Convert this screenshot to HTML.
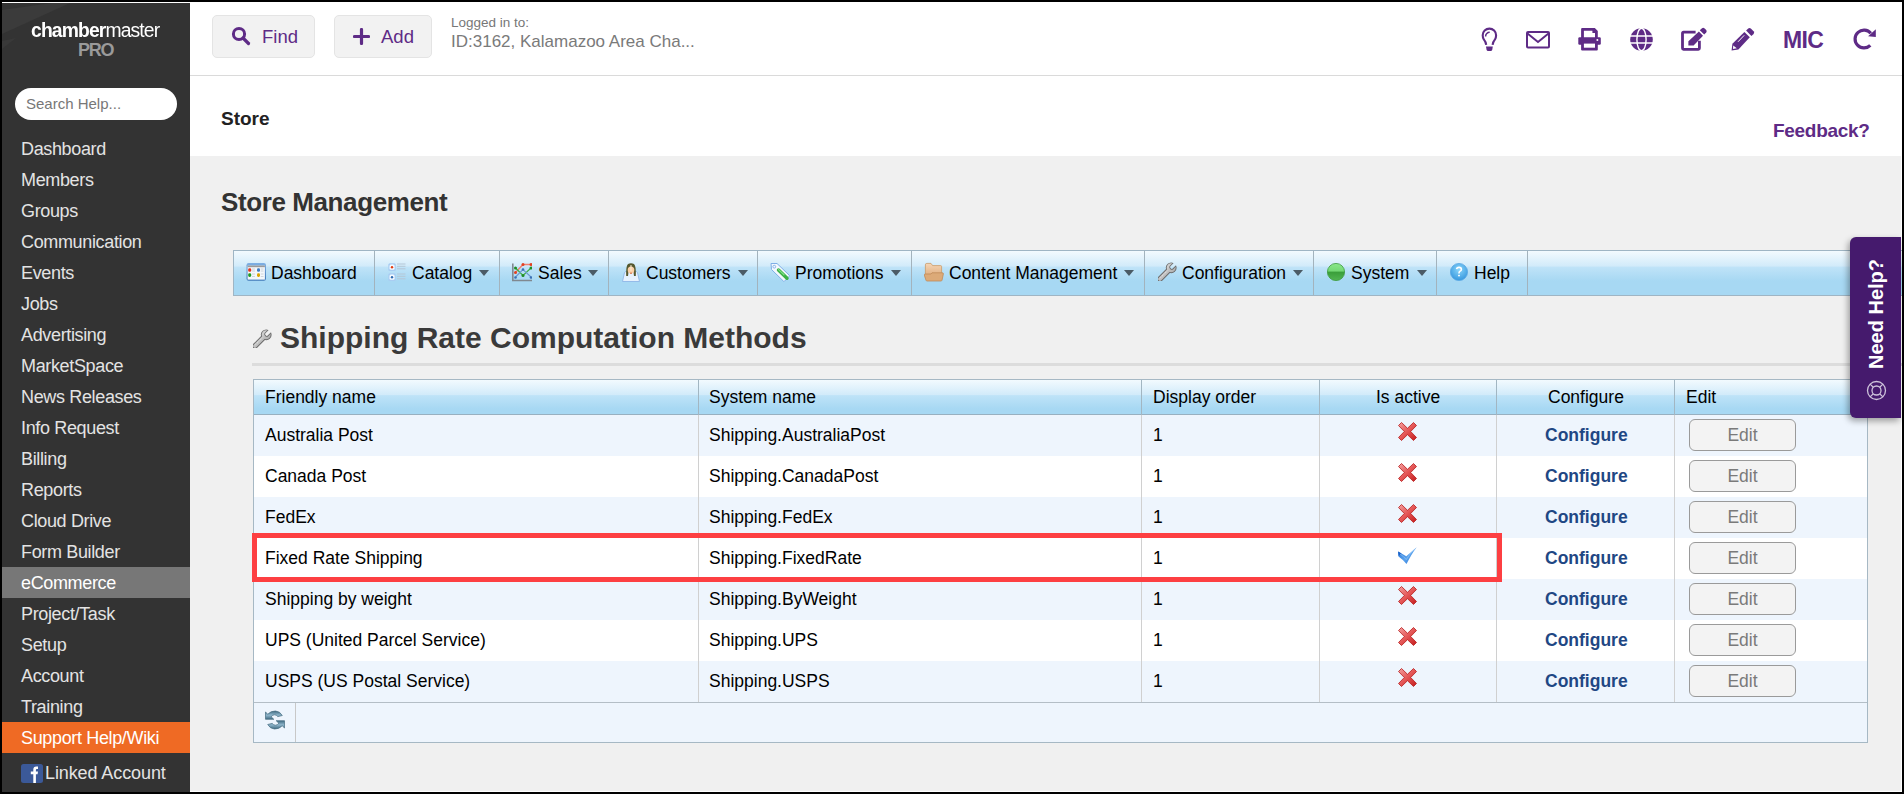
<!DOCTYPE html>
<html><head><meta charset="utf-8">
<style>
*{margin:0;padding:0;box-sizing:border-box}
html,body{width:1904px;height:794px;overflow:hidden;background:#000;font-family:"Liberation Sans",sans-serif;position:relative}
.a,.t{position:absolute}
.t{white-space:nowrap}
#frame{position:absolute;left:2px;top:2px;width:1900px;height:790px;background:#fff}
#side{position:absolute;left:2px;top:3px;width:188px;height:789px;background:#333;overflow:hidden}
.nav{position:absolute;left:2px;width:188px;height:31px;color:#e3e3e3;font-size:18px;letter-spacing:-0.35px;padding-left:19px;line-height:33px;white-space:nowrap}
.nav.sel{background:#777;color:#fff}
.nav.org{background:#ef6a24;color:#fff}
#topline{position:absolute;left:190px;top:75px;width:1712px;height:1px;background:#dadada}
.btn{position:absolute;top:15px;height:43px;background:#f2f2f2;border:1px solid #e4e4e4;border-radius:5px;color:#5e2b86;font-size:18px}
#gray{position:absolute;left:190px;top:156px;width:1711px;height:635px;background:#f0f0f0}
#menu{position:absolute;left:233px;top:250px;width:1669px;height:46px;border:1px solid #9fb5c4;border-right:none;
background:linear-gradient(#f3fafe 0%,#d2ebfa 34%,#bfe3f8 37%,#a7d8f3 68%,#a7d8f3 100%)}
.sep{position:absolute;top:251px;width:1px;height:44px;background:#a3b3bd}
.mt{position:absolute;top:263px;font-size:17.5px;color:#000;white-space:nowrap}
.arr{position:absolute;top:270px;width:0;height:0;border-left:5px solid transparent;border-right:5px solid transparent;border-top:6px solid #4b5b66}
#tbl{position:absolute;left:253px;top:379px;width:1615px;height:364px;border:1px solid #a6b8c4;background:#eef5fd}
#hdr{position:absolute;left:254px;top:380px;width:1613px;height:35px;border-bottom:1px solid #98b0c0;
background:linear-gradient(#f2fafe 0%,#d2ebfa 43%,#bee3f8 46%,#a7d8f3 85%,#a7d8f3 100%)}
.row{position:absolute;left:254px;width:1613px;height:41px;background:#eef5fd}
.row.w{background:#fff}
.vl{position:absolute;width:1px;background:#d0d0d0}
.cell{position:absolute;font-size:17.5px;color:#000;white-space:nowrap}
.cfg{position:absolute;font-size:17.5px;font-weight:bold;color:#1f4784;white-space:nowrap}
.eb{position:absolute;left:1689px;width:107px;height:32px;border:1px solid #9a9a9a;border-radius:6px;background:#f3f3f3;color:#7a7a7a;font-size:17.5px;text-align:center;line-height:30px}
</style></head><body>
<div id="frame"></div>
<div id="topline"></div>
<div class="btn" style="left:212px;width:103px"></div>
<svg class="a" style="left:231px;top:26px" width="20" height="20" viewBox="0 0 20 20"><circle cx="8" cy="8" r="5.6" fill="none" stroke="#5e2b86" stroke-width="3"/><path d="M12 12 L17.5 17.5" stroke="#5e2b86" stroke-width="3.2" stroke-linecap="round"/></svg>
<div class="t" style="left:262px;top:26px;font-size:18.5px;color:#5e2b86">Find</div>
<div class="btn" style="left:334px;width:98px"></div>
<svg class="a" style="left:353px;top:28px" width="17" height="17" viewBox="0 0 17 17"><path d="M8.5 1.5 V15.5 M1.5 8.5 H15.5" stroke="#5e2b86" stroke-width="3.2" stroke-linecap="round"/></svg>
<div class="t" style="left:381px;top:26px;font-size:18.5px;color:#5e2b86">Add</div>
<div class="t" style="left:451px;top:15px;font-size:13.5px;color:#777">Logged in to:</div>
<div class="t" style="left:451px;top:32px;font-size:17px;color:#7a7a7a">ID:3162, Kalamazoo Area Cha...</div>
<!-- icons -->
<svg class="a" style="left:1480px;top:27px" width="19" height="25" viewBox="0 0 19 25"><path d="M6.2 17.8 Q5.8 14.8 3.8 12.4 Q2.7 10.8 2.7 8.3 A6.7 6.7 0 0 1 16.1 8.3 Q16.1 10.8 15 12.4 Q13 14.8 12.6 17.8" fill="none" stroke="#5e2b86" stroke-width="2.1"/><path d="M6 19.6 H12.8 L12.2 23 Q11.8 24.1 10.8 24.1 H8 Q7 24.1 6.6 23 Z" fill="#5e2b86"/><path d="M5.6 9.4 A4.1 4.1 0 0 1 9.7 5.2" fill="none" stroke="#5e2b86" stroke-width="1.5"/></svg>
<svg class="a" style="left:1525px;top:30px" width="26" height="19" viewBox="0 0 26 19"><rect x="2" y="2" width="22" height="15.5" rx="1" fill="none" stroke="#5e2b86" stroke-width="2"/><path d="M2.5 3.5 L13 12 L23.5 3.5" fill="none" stroke="#5e2b86" stroke-width="2"/></svg>
<svg class="a" style="left:1577px;top:27px" width="25" height="25" viewBox="0 0 25 25"><path d="M5.1 1 H17.8 L20.8 4 V11 H4.1 V2 Q4.1 1 5.1 1 Z" fill="#5e2b86"/><path d="M6.9 3.8 H15.4 V6.1 H18 V11 H6.9 Z" fill="#fff"/><rect x="1.3" y="10.2" width="22.5" height="7.5" rx="1.2" fill="#5e2b86"/><circle cx="20.4" cy="13" r="1" fill="#fff"/><path d="M4.1 16 H20.8 V22.5 Q20.8 23.5 19.8 23.5 H5.1 Q4.1 23.5 4.1 22.5 Z" fill="#5e2b86"/><rect x="6.9" y="16.6" width="11.1" height="4.1" fill="#fff"/></svg>
<svg class="a" style="left:1629px;top:27px" width="25" height="25" viewBox="0 0 25 25"><circle cx="12.5" cy="12.5" r="11.3" fill="#5e2b86"/><path d="M1 9 H24 M1 16 H24" stroke="#fff" stroke-width="1.4"/><ellipse cx="12.5" cy="12.5" rx="4.6" ry="11.3" fill="none" stroke="#fff" stroke-width="1.4"/></svg>
<svg class="a" style="left:1680px;top:27px" width="28" height="25" viewBox="0 0 28 25"><path d="M15.6 5.2 H3.5 Q2.5 5.2 2.5 6.2 V21.3 Q2.5 22.3 3.5 22.3 H18.4 Q19.4 22.3 19.4 21.3 V13.8" fill="none" stroke="#5e2b86" stroke-width="2.8"/><path d="M8.4 14.3 L18.9 4.6 L23 8.7 L13.6 18.5 L8.4 18.5 Z" fill="#5e2b86"/><path d="M19.8 3.3 L22 1.2 Q23.2 0.2 24.4 1.2 L26.2 3 Q27.2 4.2 26.2 5.4 L24.2 7.5 Z" fill="#5e2b86"/></svg>
<svg class="a" style="left:1730px;top:27px" width="26" height="25" viewBox="0 0 26 25"><path d="M16.1 3.6 L18.2 1.6 Q19.5 0.4 20.8 1.6 L23.6 4.3 Q24.8 5.6 23.6 6.9 L21.4 9 Z" fill="#5e2b86"/><path d="M14.4 5.1 L19.8 10.2 L8.4 22.4 L1.6 23.6 L2.4 16.8 Z" fill="#5e2b86"/><path d="M14.2 8.3 L8 14.8" stroke="#fff" stroke-width="1"/><path d="M3.2 18.6 L6.8 21.2 L3 21.9 Z" fill="#fff"/></svg>
<div class="t" style="left:1783px;top:27px;font-size:23px;font-weight:bold;color:#5e2b86;letter-spacing:-0.6px">MIC</div>
<svg class="a" style="left:1852px;top:27px" width="26" height="25" viewBox="0 0 26 25"><path d="M18.3 18.3 A8.9 8.9 0 1 1 18.8 6.3" fill="none" stroke="#5e2b86" stroke-width="3.2"/><path d="M16.1 9.3 L23.8 2.3 V10 Z" fill="#5e2b86"/></svg>
<div class="t" style="left:221px;top:108px;font-size:19px;font-weight:bold;color:#222">Store</div>
<div class="t" style="left:1773px;top:120px;font-size:19px;font-weight:bold;color:#5e2b86;letter-spacing:-0.3px">Feedback?</div>
<div id="gray"></div>
<div class="t" style="left:221px;top:187px;font-size:26px;font-weight:bold;color:#333;letter-spacing:-0.4px">Store Management</div>
<div id="menu"></div>
<div class="sep" style="left:374px"></div>
<div class="sep" style="left:499px"></div>
<div class="sep" style="left:608px"></div>
<div class="sep" style="left:757px"></div>
<div class="sep" style="left:911px"></div>
<div class="sep" style="left:1144px"></div>
<div class="sep" style="left:1313px"></div>
<div class="sep" style="left:1436px"></div>
<div class="sep" style="left:1527px"></div>
<div class="mt" style="left:271px">Dashboard</div>
<svg class="a" style="left:246px;top:262px" width="20" height="20" viewBox="0 0 20 20"><defs><linearGradient id="gd1" x1="0" y1="0" x2="0" y2="1"><stop offset="0" stop-color="#7fb0e4"/><stop offset="1" stop-color="#3f78b8"/></linearGradient></defs><rect x="0.5" y="1" width="19.5" height="17.8" rx="2.2" fill="url(#gd1)"/><rect x="1.6" y="3.6" width="17.3" height="14" fill="#f3f7fb"/><rect x="1.6" y="3.6" width="17.3" height="1.6" fill="#9a9a9a"/><rect x="2.2" y="6.2" width="3" height="3.6" rx="1.3" fill="#e2321c"/><rect x="11" y="6.2" width="3" height="3.6" rx="1.3" fill="#3f7cc4"/><rect x="2.2" y="11.3" width="3" height="3.6" rx="1.3" fill="#1f9a24"/><rect x="11" y="11.3" width="3" height="3.6" rx="1.3" fill="#dca400"/><g stroke="#c4ccd4" stroke-width="0.8"><path d="M6 7 H9 M6 9 H9 M6 12 H9 M6 14.5 H9 M14.8 7 H17.5 M14.8 9 H17.5 M14.8 12 H17.5 M14.8 14.5 H17.5"/></g></svg>
<div class="mt" style="left:412px">Catalog</div>
<div class="arr" style="left:479px"></div>
<svg class="a" style="left:388px;top:263px" width="19" height="19" viewBox="0 0 19 19"><rect x="0.3" y="0.3" width="7.5" height="7.6" rx="1.5" fill="#a9cdf2"/><rect x="1.5" y="1.5" width="5.1" height="5.2" rx="1.5" fill="#f4f9ff"/><circle cx="4" cy="4.2" r="1.2" fill="#e03a10"/><rect x="0.3" y="10.3" width="7.5" height="7.6" rx="1.5" fill="#a9cdf2"/><rect x="1.5" y="11.5" width="5.1" height="5.2" rx="1.5" fill="#f4f9ff"/><circle cx="4" cy="14.2" r="1.2" fill="#2f6cb2"/><g stroke="#b5c7d6" stroke-width="1"><path d="M9 1 H17.5 M9 3.3 H17.5 M9 5.8 H17.5 M9 11 H17.5 M9 13.3 H17.5 M9 15.8 H17.5"/></g></svg>
<div class="mt" style="left:538px">Sales</div>
<div class="arr" style="left:588px"></div>
<svg class="a" style="left:512px;top:263px" width="20" height="19" viewBox="0 0 20 19"><path d="M0.8 0.5 V17.5 H20" fill="none" stroke="#808890" stroke-width="1.6"/><path d="M3.5 9.5 L11 1.5 H19" fill="none" stroke="#f08070" stroke-width="1.3"/><path d="M3.5 5 L11 12.5 L19 5" fill="none" stroke="#3cae40" stroke-width="1.1"/><path d="M3.5 14 L11 6.5 L19 14" fill="none" stroke="#6c9ad0" stroke-width="1.1"/><g fill="#e24020"><circle cx="3.5" cy="9.5" r="1.5"/><circle cx="11" cy="1.5" r="1.5"/><circle cx="19" cy="1.5" r="1.5"/></g><g fill="#1f8c26"><circle cx="3.5" cy="5" r="1.5"/><circle cx="11" cy="12.5" r="1.5"/><circle cx="19" cy="5" r="1.5"/></g><g fill="#3a70b4"><circle cx="3.5" cy="14.5" r="1.3"/><circle cx="11" cy="6.5" r="1.3"/><circle cx="19" cy="14.5" r="1.3"/></g></svg>
<div class="mt" style="left:646px">Customers</div>
<div class="arr" style="left:738px"></div>
<svg class="a" style="left:621px;top:262px" width="20" height="20" viewBox="0 0 20 20"><path d="M1.5 19.5 L3.5 10.5 Q4 9.5 5.5 9.5 H14.5 Q16 9.5 16.5 10.5 L18.5 19.5 Z" fill="#e6f1fd" stroke="#8fb6e6" stroke-width="0.9"/><path d="M5.2 14 Q4.8 4 7 2 Q10 0.3 13 2 Q15.2 4 14.8 14 L13 14 L12.5 10 H7.5 L7 14 Z" fill="#55582e"/><ellipse cx="10" cy="8" rx="3.3" ry="3.6" fill="#fbd0a8"/><path d="M9.5 3 L10.5 3 L10.3 9 L9.7 9 Z" fill="#fff4e0"/><ellipse cx="10" cy="11.2" rx="1" ry="0.6" fill="#d06030"/></svg>
<div class="mt" style="left:795px">Promotions</div>
<div class="arr" style="left:891px"></div>
<svg class="a" style="left:770px;top:262px" width="20" height="20" viewBox="0 0 20 20"><path d="M1 1.5 L7 1.5 L19.2 13.2 Q19.6 13.7 19.2 14.2 L14.5 19.2 Q14 19.6 13.5 19.2 L1.5 7.5 Z" fill="#f4f8fe" stroke="#7eaee6" stroke-width="1"/><circle cx="4.3" cy="4.7" r="1.4" fill="none" stroke="#7eaee6" stroke-width="0.9"/><path d="M8.5 8 L17 16.3" stroke="#3bb146" stroke-width="3.4" stroke-linecap="round"/><path d="M8.6 7.6 L14 12.8" stroke="#7fe088" stroke-width="1.2" stroke-linecap="round"/></svg>
<div class="mt" style="left:949px">Content Management</div>
<div class="arr" style="left:1124px"></div>
<svg class="a" style="left:924px;top:262px" width="20" height="20" viewBox="0 0 20 20"><defs><linearGradient id="gf" x1="0" y1="0" x2="0" y2="1"><stop offset="0" stop-color="#f6d6b6"/><stop offset="1" stop-color="#dca878"/></linearGradient></defs><path d="M1.4 2.8 Q1.4 1.4 2.8 1.4 H7 L8.6 3.6 H16.6 Q17.6 3.6 17.6 4.6 V15.5 H1.4 Z" fill="url(#gf)" stroke="#c99a68" stroke-width="0.8"/><path d="M0.3 13 Q0.3 12 1.3 12 H7 L8 10.8 H18.5 Q19.4 10.8 19.4 11.8 L18 18.3 Q17.8 19 17 19 H3 Q2.2 19 2 18.3 Z" fill="#dcaa78" stroke="#c08a58" stroke-width="0.8"/></svg>
<div class="mt" style="left:1182px">Configuration</div>
<div class="arr" style="left:1293px"></div>
<svg class="a" style="left:1157px;top:262px" width="20" height="20" viewBox="0 0 20 20"><defs><mask id="m1b"><rect width="20" height="20" fill="#fff"/><path d="M14.8 5.2 L21 -1" stroke="#000" stroke-width="3.2" stroke-linecap="round"/></mask><mask id="m2b"><rect width="20" height="20" fill="#fff"/><path d="M14.8 5.2 L21 -1" stroke="#000" stroke-width="4.8" stroke-linecap="round"/></mask><linearGradient id="wgb" x1="0" y1="0" x2="1" y2="1"><stop offset="0" stop-color="#dadada"/><stop offset="1" stop-color="#a8a8a8"/></linearGradient></defs><g mask="url(#m1b)"><circle cx="14.2" cy="5.8" r="5.4" fill="#6a6a6a"/><path d="M3 17 L12 8" stroke="#6a6a6a" stroke-width="5.4" stroke-linecap="round"/></g><g mask="url(#m2b)"><circle cx="14.2" cy="5.8" r="4.5" fill="url(#wgb)"/><path d="M3 17 L12 8" stroke="url(#wgb)" stroke-width="3.6" stroke-linecap="round"/></g><path d="M3.6 15.6 L10.5 8.7" stroke="#ececec" stroke-width="0.8" stroke-dasharray="1.2 1"/></svg>
<div class="mt" style="left:1351px">System</div>
<div class="arr" style="left:1417px"></div>
<svg class="a" style="left:1327px;top:263px" width="18" height="18" viewBox="0 0 18 18"><defs><linearGradient id="gs" x1="0" y1="0" x2="0" y2="1"><stop offset="0" stop-color="#8ae88a"/><stop offset="0.45" stop-color="#74d874"/><stop offset="0.5" stop-color="#3a9e3a"/><stop offset="1" stop-color="#52b552"/></linearGradient></defs><circle cx="9" cy="9" r="8.6" fill="url(#gs)" stroke="#3e9a3e" stroke-width="0.8"/></svg>
<div class="mt" style="left:1474px">Help</div>
<svg class="a" style="left:1450px;top:263px" width="18" height="18" viewBox="0 0 18 18"><defs><radialGradient id="gh" cx="0.5" cy="0.35" r="0.6"><stop offset="0" stop-color="#8ad6fb"/><stop offset="1" stop-color="#3d9ce0"/></radialGradient></defs><circle cx="9" cy="9" r="8.6" fill="url(#gh)" stroke="#5aa8e4" stroke-width="0.8"/><path d="M6.6 6.2 Q6.8 4.4 9 4.4 Q11.4 4.4 11.4 6.4 Q11.4 7.6 9.8 8.4 Q9 8.9 9 10.4" fill="none" stroke="#fff" stroke-width="1.6"/><rect x="8.1" y="11.8" width="1.8" height="1.5" fill="#fff"/></svg>

<div id="side">
 <svg class="a" style="left:0;top:0" width="188" height="60"><path d="M0 7 L50 0 L68 0 L0 31 Z" fill="#3b3b3b"/><path d="M0 38 L14 35 L0 46 Z" fill="#393939"/></svg>
</div>
<div class="t" style="left:31px;top:19px;font-size:20px;color:#fff;letter-spacing:-0.9px;transform:scaleX(0.966);transform-origin:0 0"><b>chamber</b>master</div>
<div class="t" style="left:78px;top:40px;font-size:18px;color:#9a9a9a;font-weight:bold;letter-spacing:-1.3px">PRO</div>
<div class="a" style="left:15px;top:88px;width:162px;height:32px;border-radius:16px;background:#fff"></div>
<div class="t" style="left:26px;top:95px;font-size:15px;color:#777">Search Help...</div>
<div class="nav" style="top:133px">Dashboard</div>
<div class="nav" style="top:164px">Members</div>
<div class="nav" style="top:195px">Groups</div>
<div class="nav" style="top:226px">Communication</div>
<div class="nav" style="top:257px">Events</div>
<div class="nav" style="top:288px">Jobs</div>
<div class="nav" style="top:319px">Advertising</div>
<div class="nav" style="top:350px">MarketSpace</div>
<div class="nav" style="top:381px">News Releases</div>
<div class="nav" style="top:412px">Info Request</div>
<div class="nav" style="top:443px">Billing</div>
<div class="nav" style="top:474px">Reports</div>
<div class="nav" style="top:505px">Cloud Drive</div>
<div class="nav" style="top:536px">Form Builder</div>
<div class="nav sel" style="top:567px">eCommerce</div>
<div class="nav" style="top:598px">Project/Task</div>
<div class="nav" style="top:629px">Setup</div>
<div class="nav" style="top:660px">Account</div>
<div class="nav" style="top:691px">Training</div>
<div class="nav org" style="top:722px">Support Help/Wiki</div>
<svg class="a" style="left:21px;top:764px" width="22" height="19" viewBox="0 0 22 19"><rect x="0" y="0" width="22" height="19" rx="2.5" fill="#3b5998"/><path d="M12.3 19 V10.3 H9.8 V7.6 H12.3 V5.6 Q12.3 2.4 15.3 2.4 H17 V5 H15.8 Q14.9 5 14.9 6 V7.6 H17 L16.6 10.3 H14.9 V19 Z" fill="#fff"/></svg>
<div class="t" style="left:45px;top:763px;font-size:18px;color:#e3e3e3;letter-spacing:-0.1px">Linked Account</div>

<svg class="a" style="left:252px;top:329px" width="20" height="20" viewBox="0 0 20 20"><defs><mask id="m1a"><rect width="20" height="20" fill="#fff"/><path d="M14.8 5.2 L21 -1" stroke="#000" stroke-width="3.2" stroke-linecap="round"/></mask><mask id="m2a"><rect width="20" height="20" fill="#fff"/><path d="M14.8 5.2 L21 -1" stroke="#000" stroke-width="4.8" stroke-linecap="round"/></mask><linearGradient id="wga" x1="0" y1="0" x2="1" y2="1"><stop offset="0" stop-color="#dadada"/><stop offset="1" stop-color="#a8a8a8"/></linearGradient></defs><g mask="url(#m1a)"><circle cx="14.2" cy="5.8" r="5.4" fill="#6a6a6a"/><path d="M3 17 L12 8" stroke="#6a6a6a" stroke-width="5.4" stroke-linecap="round"/></g><g mask="url(#m2a)"><circle cx="14.2" cy="5.8" r="4.5" fill="url(#wga)"/><path d="M3 17 L12 8" stroke="url(#wga)" stroke-width="3.6" stroke-linecap="round"/></g><path d="M3.6 15.6 L10.5 8.7" stroke="#ececec" stroke-width="0.8" stroke-dasharray="1.2 1"/></svg>
<div class="t" style="left:280px;top:321px;font-size:30px;font-weight:bold;color:#3a3a3a">Shipping Rate Computation Methods</div>
<div class="a" style="left:252px;top:363px;width:1650px;height:3px;background:#dcdcdc"></div>
<div id="tbl"></div>
<div id="hdr"></div>
<div class="row" style="top:415px"></div>
<div class="row w" style="top:456px"></div>
<div class="row" style="top:497px"></div>
<div class="row w" style="top:538px"></div>
<div class="row" style="top:579px"></div>
<div class="row w" style="top:620px"></div>
<div class="row" style="top:661px"></div>
<div class="vl" style="left:698px;top:415px;height:287px"></div>
<div class="vl" style="left:698px;top:380px;height:35px;background:#a2b6c2"></div>
<div class="vl" style="left:1141px;top:415px;height:287px"></div>
<div class="vl" style="left:1141px;top:380px;height:35px;background:#a2b6c2"></div>
<div class="vl" style="left:1319px;top:415px;height:287px"></div>
<div class="vl" style="left:1319px;top:380px;height:35px;background:#a2b6c2"></div>
<div class="vl" style="left:1496px;top:415px;height:287px"></div>
<div class="vl" style="left:1496px;top:380px;height:35px;background:#a2b6c2"></div>
<div class="vl" style="left:1674px;top:415px;height:287px"></div>
<div class="vl" style="left:1674px;top:380px;height:35px;background:#a2b6c2"></div>
<div class="a" style="left:254px;top:702px;width:1613px;height:1px;background:#b4bec6"></div>
<div class="vl" style="left:295px;top:703px;height:39px;background:#c8c8c8"></div>
<div class="cell" style="left:265px;top:387px">Friendly name</div>
<div class="cell" style="left:709px;top:387px">System name</div>
<div class="cell" style="left:1153px;top:387px">Display order</div>
<div class="cell" style="left:1376px;top:387px">Is active</div>
<div class="cell" style="left:1548px;top:387px">Configure</div>
<div class="cell" style="left:1686px;top:387px">Edit</div>
<div class="cell" style="left:265px;top:425px">Australia Post</div>
<div class="cell" style="left:709px;top:425px">Shipping.AustraliaPost</div>
<div class="cell" style="left:1153px;top:425px">1</div>
<svg class="a" style="left:1398px;top:422px" width="19" height="19" viewBox="0 0 19 19"><defs><linearGradient id="gx0" x1="0" y1="0" x2="1" y2="1"><stop offset="0" stop-color="#f4a0a0"/><stop offset="0.5" stop-color="#e45656"/><stop offset="1" stop-color="#c41c1c"/></linearGradient></defs><path d="M0.5 3.5 L3.5 0.5 L9.5 6.3 L15.5 0.5 L18.5 3.5 L12.7 9.5 L18.5 15.5 L15.5 18.5 L9.5 12.7 L3.5 18.5 L0.5 15.5 L6.3 9.5 Z" fill="url(#gx0)" stroke="#b81c1c" stroke-width="0.8" stroke-linejoin="round"/></svg>
<div class="cfg" style="left:1545px;top:425px">Configure</div>
<div class="eb" style="top:419px">Edit</div>
<div class="cell" style="left:265px;top:466px">Canada Post</div>
<div class="cell" style="left:709px;top:466px">Shipping.CanadaPost</div>
<div class="cell" style="left:1153px;top:466px">1</div>
<svg class="a" style="left:1398px;top:463px" width="19" height="19" viewBox="0 0 19 19"><defs><linearGradient id="gx1" x1="0" y1="0" x2="1" y2="1"><stop offset="0" stop-color="#f4a0a0"/><stop offset="0.5" stop-color="#e45656"/><stop offset="1" stop-color="#c41c1c"/></linearGradient></defs><path d="M0.5 3.5 L3.5 0.5 L9.5 6.3 L15.5 0.5 L18.5 3.5 L12.7 9.5 L18.5 15.5 L15.5 18.5 L9.5 12.7 L3.5 18.5 L0.5 15.5 L6.3 9.5 Z" fill="url(#gx1)" stroke="#b81c1c" stroke-width="0.8" stroke-linejoin="round"/></svg>
<div class="cfg" style="left:1545px;top:466px">Configure</div>
<div class="eb" style="top:460px">Edit</div>
<div class="cell" style="left:265px;top:507px">FedEx</div>
<div class="cell" style="left:709px;top:507px">Shipping.FedEx</div>
<div class="cell" style="left:1153px;top:507px">1</div>
<svg class="a" style="left:1398px;top:504px" width="19" height="19" viewBox="0 0 19 19"><defs><linearGradient id="gx2" x1="0" y1="0" x2="1" y2="1"><stop offset="0" stop-color="#f4a0a0"/><stop offset="0.5" stop-color="#e45656"/><stop offset="1" stop-color="#c41c1c"/></linearGradient></defs><path d="M0.5 3.5 L3.5 0.5 L9.5 6.3 L15.5 0.5 L18.5 3.5 L12.7 9.5 L18.5 15.5 L15.5 18.5 L9.5 12.7 L3.5 18.5 L0.5 15.5 L6.3 9.5 Z" fill="url(#gx2)" stroke="#b81c1c" stroke-width="0.8" stroke-linejoin="round"/></svg>
<div class="cfg" style="left:1545px;top:507px">Configure</div>
<div class="eb" style="top:501px">Edit</div>
<div class="cell" style="left:265px;top:548px">Fixed Rate Shipping</div>
<div class="cell" style="left:709px;top:548px">Shipping.FixedRate</div>
<div class="cell" style="left:1153px;top:548px">1</div>
<svg class="a" style="left:1398px;top:547px" width="19" height="18" viewBox="0 0 19 18"><defs><linearGradient id="gck" x1="0" y1="0" x2="1" y2="1"><stop offset="0" stop-color="#1f6cd4"/><stop offset="0.55" stop-color="#5aa2ec"/><stop offset="1" stop-color="#1f6cd4"/></linearGradient></defs><path d="M0 4.4 L8.3 9.2 L18.7 0.2 Q13.8 6.5 8.5 17 Q5 12.5 0.5 9.4 Z" fill="url(#gck)"/><path d="M0.2 4.5 L3.5 6.4 L0.6 9 Z" fill="#1a62c8"/><path d="M2 7 Q5.3 9 8.3 12.6 Q11.5 6.8 16.8 2" fill="none" stroke="#9fd0fa" stroke-width="0.8" opacity="0.7"/></svg>
<div class="cfg" style="left:1545px;top:548px">Configure</div>
<div class="eb" style="top:542px">Edit</div>
<div class="cell" style="left:265px;top:589px">Shipping by weight</div>
<div class="cell" style="left:709px;top:589px">Shipping.ByWeight</div>
<div class="cell" style="left:1153px;top:589px">1</div>
<svg class="a" style="left:1398px;top:586px" width="19" height="19" viewBox="0 0 19 19"><defs><linearGradient id="gx4" x1="0" y1="0" x2="1" y2="1"><stop offset="0" stop-color="#f4a0a0"/><stop offset="0.5" stop-color="#e45656"/><stop offset="1" stop-color="#c41c1c"/></linearGradient></defs><path d="M0.5 3.5 L3.5 0.5 L9.5 6.3 L15.5 0.5 L18.5 3.5 L12.7 9.5 L18.5 15.5 L15.5 18.5 L9.5 12.7 L3.5 18.5 L0.5 15.5 L6.3 9.5 Z" fill="url(#gx4)" stroke="#b81c1c" stroke-width="0.8" stroke-linejoin="round"/></svg>
<div class="cfg" style="left:1545px;top:589px">Configure</div>
<div class="eb" style="top:583px">Edit</div>
<div class="cell" style="left:265px;top:630px">UPS (United Parcel Service)</div>
<div class="cell" style="left:709px;top:630px">Shipping.UPS</div>
<div class="cell" style="left:1153px;top:630px">1</div>
<svg class="a" style="left:1398px;top:627px" width="19" height="19" viewBox="0 0 19 19"><defs><linearGradient id="gx5" x1="0" y1="0" x2="1" y2="1"><stop offset="0" stop-color="#f4a0a0"/><stop offset="0.5" stop-color="#e45656"/><stop offset="1" stop-color="#c41c1c"/></linearGradient></defs><path d="M0.5 3.5 L3.5 0.5 L9.5 6.3 L15.5 0.5 L18.5 3.5 L12.7 9.5 L18.5 15.5 L15.5 18.5 L9.5 12.7 L3.5 18.5 L0.5 15.5 L6.3 9.5 Z" fill="url(#gx5)" stroke="#b81c1c" stroke-width="0.8" stroke-linejoin="round"/></svg>
<div class="cfg" style="left:1545px;top:630px">Configure</div>
<div class="eb" style="top:624px">Edit</div>
<div class="cell" style="left:265px;top:671px">USPS (US Postal Service)</div>
<div class="cell" style="left:709px;top:671px">Shipping.USPS</div>
<div class="cell" style="left:1153px;top:671px">1</div>
<svg class="a" style="left:1398px;top:668px" width="19" height="19" viewBox="0 0 19 19"><defs><linearGradient id="gx6" x1="0" y1="0" x2="1" y2="1"><stop offset="0" stop-color="#f4a0a0"/><stop offset="0.5" stop-color="#e45656"/><stop offset="1" stop-color="#c41c1c"/></linearGradient></defs><path d="M0.5 3.5 L3.5 0.5 L9.5 6.3 L15.5 0.5 L18.5 3.5 L12.7 9.5 L18.5 15.5 L15.5 18.5 L9.5 12.7 L3.5 18.5 L0.5 15.5 L6.3 9.5 Z" fill="url(#gx6)" stroke="#b81c1c" stroke-width="0.8" stroke-linejoin="round"/></svg>
<div class="cfg" style="left:1545px;top:671px">Configure</div>
<div class="eb" style="top:665px">Edit</div>
<div class="a" style="left:252px;top:533px;width:1250px;height:49px;border:5px solid #fd3f42"></div>
<svg class="a" style="left:265px;top:710px" width="20" height="20" viewBox="0 0 20 20"><defs><linearGradient id="gr" x1="0" y1="0" x2="0" y2="1"><stop offset="0" stop-color="#3f6a80"/><stop offset="0.5" stop-color="#8fb6cc"/><stop offset="1" stop-color="#3f6a80"/></linearGradient></defs><path d="M0.5 2 L2.8 4.2 Q6 0.8 10.5 1 Q15 1.3 17.3 5.5 L12.8 6.6 Q11.5 4.8 9.5 4.8 Q7.5 4.9 6.2 6.8 L8.8 9.3 H0.5 Z" fill="url(#gr)" stroke="#456c80" stroke-width="0.7"/><path d="M19.5 18 L17.2 15.8 Q14 19.2 9.5 19 Q5 18.7 2.7 14.5 L7.2 13.4 Q8.5 15.2 10.5 15.2 Q12.5 15.1 13.8 13.2 L11.2 10.7 H19.5 Z" fill="url(#gr)" stroke="#456c80" stroke-width="0.7"/></svg>
<div class="a" style="left:1850px;top:237px;width:51px;height:181px;background:#451a6d;border-radius:6px 0 0 6px;box-shadow:-2px 3px 6px rgba(0,0,0,0.35)"></div>
<div class="a" style="left:1815.5px;top:302px;width:120px;height:24px;transform:rotate(-90deg);font-size:20px;font-weight:bold;color:#fff;line-height:24px;text-align:center;white-space:nowrap">Need Help?</div>
<svg class="a" style="left:1865.5px;top:379.5px" width="21" height="21" viewBox="0 0 21 21"><g fill="none" stroke="#cdc2da" stroke-width="1.3"><circle cx="10.5" cy="10.5" r="9"/><circle cx="10.5" cy="10.5" r="4.5"/><path d="M4.1 4.1 L7.3 7.3 M16.9 4.1 L13.7 7.3 M4.1 16.9 L7.3 13.7 M16.9 16.9 L13.7 13.7"/></g></svg>
</body></html>
